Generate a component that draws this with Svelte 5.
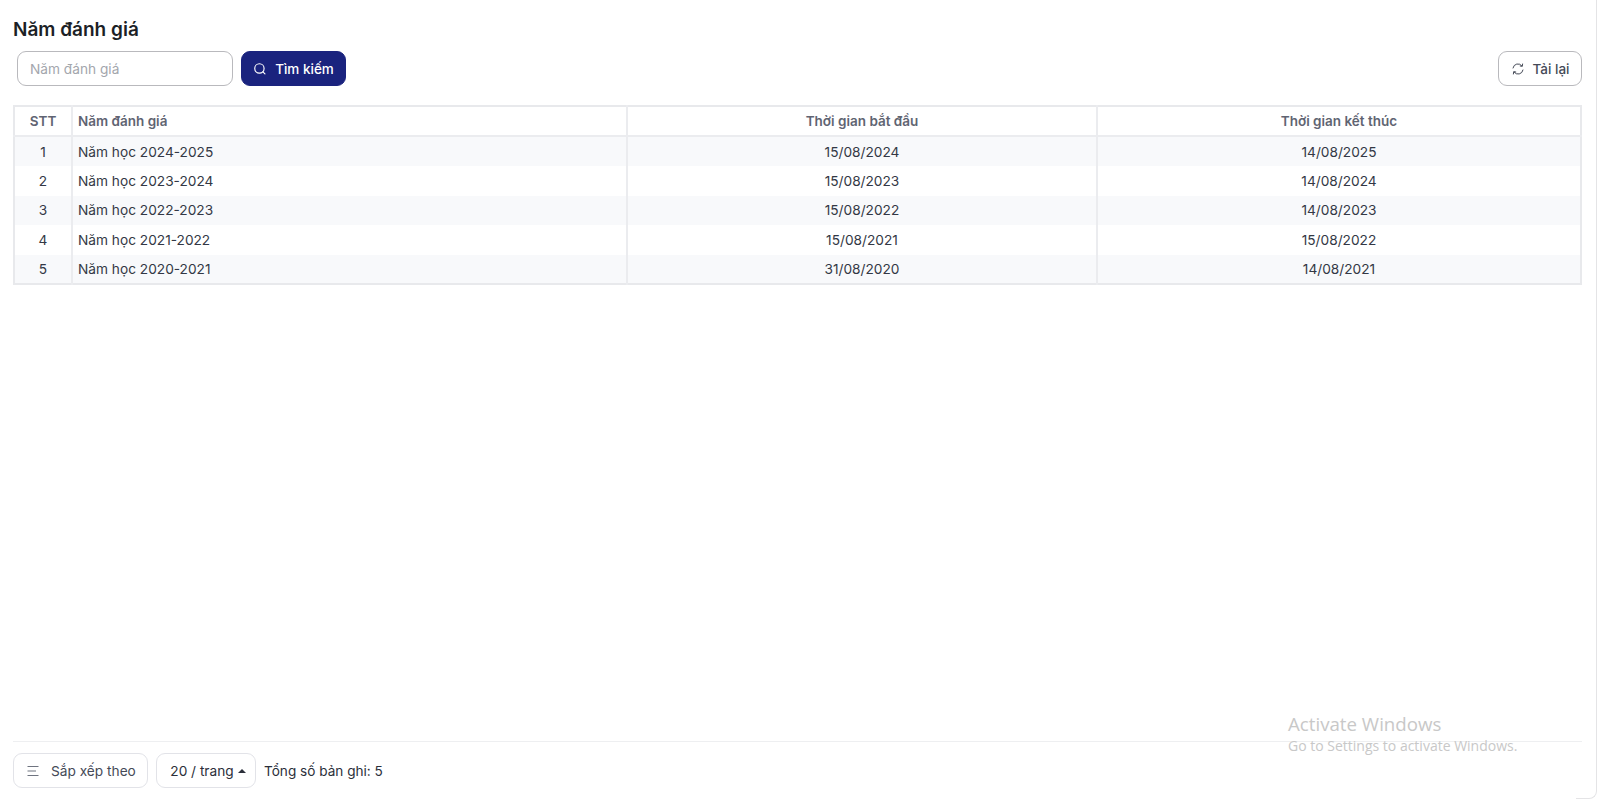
<script>
    const rows = [
        { stt: 1, name: 'Năm học 2024-2025', start: '15/08/2024', end: '14/08/2025' },
        { stt: 2, name: 'Năm học 2023-2024', start: '15/08/2023', end: '14/08/2024' },
        { stt: 3, name: 'Năm học 2022-2023', start: '15/08/2022', end: '14/08/2023' },
        { stt: 4, name: 'Năm học 2021-2022', start: '15/08/2021', end: '15/08/2022' },
        { stt: 5, name: 'Năm học 2020-2021', start: '31/08/2020', end: '14/08/2021' }
    ];
</script>

<div class="page">
    <main class="content">
        <h1 class="title">Năm đánh giá</h1>

        <div class="toolbar">
            <input class="search" type="text" placeholder="Năm đánh giá" />
            <button class="btn primary">
                <svg width="14" height="14" viewBox="0 0 24 24" fill="none" stroke="currentColor" stroke-width="2" stroke-linecap="round">
                    <circle cx="11" cy="11" r="8" />
                    <path d="M20.5 20.5 17 17" />
                </svg>
                Tìm kiếm
            </button>
            <button class="btn reload">
                <svg width="14" height="14" viewBox="0 0 14 14" fill="none" stroke="currentColor" stroke-width="1" stroke-linecap="round" stroke-linejoin="round">
                    <path d="M2 6A5 5 0 0 1 10.9 3.9" />
                    <path d="M11.6 2 11.3 4.3 9.2 4" />
                    <path d="M12 8A5 5 0 0 1 3.1 10.1" />
                    <path d="M2.4 12 2.7 9.7 4.8 10" />
                </svg>
                Tải lại
            </button>
        </div>

        <table class="grid">
            <colgroup>
                <col class="c-stt" />
                <col class="c-name" />
                <col class="c-start" />
                <col class="c-end" />
            </colgroup>
            <thead>
                <tr>
                    <th>STT</th>
                    <th class="left">Năm đánh giá</th>
                    <th>Thời gian bắt đầu</th>
                    <th>Thời gian kết thúc</th>
                </tr>
            </thead>
            <tbody>
                {#each rows as row}
                    <tr>
                        <td>{row.stt}</td>
                        <td class="left">{row.name}</td>
                        <td>{row.start}</td>
                        <td>{row.end}</td>
                    </tr>
                {/each}
            </tbody>
        </table>

        <footer class="footer">
            <button class="btn sort">
                <svg width="14" height="14" viewBox="0 0 14 14" fill="none" stroke="currentColor" stroke-width="1">
                    <path d="M1.5 2.5h11M1.5 7h8.5M1.5 11.5h11" />
                </svg>
                Sắp xếp theo
            </button>
            <button class="btn size">
                20 / trang
                <svg width="8" height="4" viewBox="0 0 8 4"><path d="M4 0 8 4H0z" fill="currentColor" /></svg>
            </button>
            <span class="total">Tổng số bản ghi: 5</span>
        </footer>
    </main>

    <div class="activate">
        <div class="a-title">Activate Windows</div>
        <div class="a-sub">Go to Settings to activate Windows.</div>
    </div>
</div>

<style>
    :global(body) {
        margin: 0;
        background: #fff;
    }

    .page {
        position: relative;
        height: 800px;
        overflow: hidden;
        font-family: Inter, 'Noto Sans', sans-serif;
        color: #1f2430;
    }

    .page::after {
        content: '';
        position: absolute;
        top: -20px;
        right: 3px;
        bottom: 1px;
        width: 20px;
        border-right: 1px solid #e4e4e6;
        border-bottom: 1px solid #e4e4e6;
        border-bottom-right-radius: 8px;
        pointer-events: none;
    }

    .content {
        display: flex;
        flex-direction: column;
        height: 800px;
        box-sizing: border-box;
        padding: 17px 18px 12px 13px;
    }

    .title {
        margin: 0;
        font-size: 19px;
        line-height: 26px;
        font-weight: 600;
        color: #1c1f26;
    }

    .toolbar {
        display: flex;
        align-items: center;
        gap: 8px;
        margin-top: 8px;
        padding-left: 4px;
    }

    .search {
        width: 216px;
        height: 35px;
        box-sizing: border-box;
        padding: 0 12px;
        border: 1px solid #b9b9bd;
        border-radius: 9px;
        font: 13.7px Inter, sans-serif;
        outline: none;
    }

    .search::placeholder {
        color: #a3a6ad;
    }

    .btn {
        display: inline-flex;
        align-items: center;
        height: 35px;
        box-sizing: border-box;
        background: #fff;
        border: 1px solid #e2e3e8;
        border-radius: 9px;
        font: 500 13.5px Inter, sans-serif;
        color: #454a57;
    }

    .primary {
        width: 105px;
        justify-content: center;
        gap: 8px;
        background: #1a237e;
        border-color: #1a237e;
        color: #fff;
    }

    .reload {
        width: 84px;
        margin-left: auto;
        justify-content: center;
        gap: 8px;
        border-color: #b9b9bd;
    }

    .grid {
        width: 100%;
        margin-top: 19px;
        border-collapse: collapse;
        table-layout: fixed;
        border: 2px solid #e8e9ec;
        font-size: 13.7px;
    }

    .c-stt {
        width: 58px;
    }

    .c-name {
        width: 555px;
    }

    .c-start {
        width: 470px;
    }

    th,
    td {
        padding: 0 5px;
        text-align: center;
        border-left: 2px solid #ebecef;
        line-height: 16px;
    }

    th:first-child,
    td:first-child {
        border-left: 0;
    }

    th {
        height: 28px;
        font-size: 13.5px;
        font-weight: 600;
        color: #5f6472;
        border-bottom: 2px solid #ebecef;
    }

    td {
        height: 29.4px;
        color: #333845;
    }

    tbody tr:last-child td {
        height: 28.4px;
    }

    tbody tr:nth-child(odd) {
        background: #f8f9fb;
    }

    .left {
        text-align: left;
    }

    .footer {
        display: flex;
        align-items: center;
        gap: 8px;
        margin-top: auto;
        padding-top: 11px;
        border-top: 1px solid #eeeff1;
    }

    .sort {
        width: 135px;
        justify-content: flex-start;
        gap: 11px;
        padding-left: 12px;
        font-size: 13.7px;
        font-weight: 400;
        color: #454a57;
    }

    .sort svg {
        color: #6f7480;
    }

    .size {
        width: 100px;
        justify-content: center;
        gap: 4px;
        padding: 0 4px 0 8px;
        font-size: 13.7px;
        font-weight: 400;
        color: #2b2f3a;
    }

    .total {
        font-size: 13.6px;
        color: #2b2f3a;
    }

    .activate {
        position: absolute;
        left: 1288px;
        top: 711px;
        font-family: 'Open Sans', sans-serif;
        color: #c8c8c8;
        pointer-events: none;
    }

    .a-title {
        font-size: 18.7px;
        line-height: 25px;
    }

    .a-sub {
        font-size: 14px;
        line-height: 18px;
        margin-top: 1px;
    }
</style>
